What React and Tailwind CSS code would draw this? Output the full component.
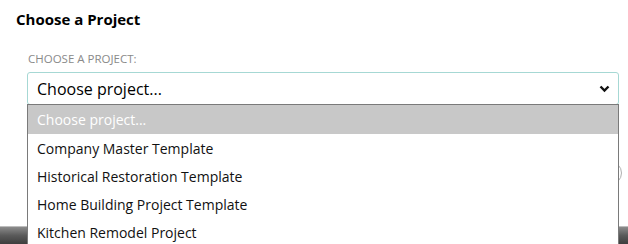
import React from "react";

const options = [
  "Company Master Template",
  "Historical Restoration Template",
  "Home Building Project Template",
  "Kitchen Remodel Project",
];

export default function App() {
  return (
    <div
      className="relative w-[628px] h-[244px] overflow-hidden bg-white flex flex-col"
      style={{ fontFamily: '"Open Sans", "Noto Sans", sans-serif' }}
    >
      <h1 className="pl-4 pt-[9px] text-[15px] font-bold text-black leading-[20px]">
        Choose a Project
      </h1>
      <div className="pl-[28px] pt-[23px] text-[11.5px] text-[#8a8a8a] leading-[14px]">
        CHOOSE A PROJECT:
      </div>
      <div className="ml-[27px] mt-[6px] w-[592px] h-[33px] border border-[#a6d8d4] rounded-[3px] flex items-center justify-between pl-[9px] pr-[8px]">
        <span className="text-[16px] text-black">Choose project...</span>
        <svg width="11" height="8" viewBox="0 0 11 8" className="mt-[1px]">
          <path d="M1.5 1.5 L5.5 5.5 L9.5 1.5" fill="none" stroke="#111" strokeWidth="2.4" />
        </svg>
      </div>
      <div className="flex-1 flex justify-end items-start pt-[56px]">
        <div className="w-[70px] h-[24px] rounded-full border border-[#b0b0b0] mr-[6px]" />
      </div>
      <div className="h-[18px] bg-gradient-to-b from-[#8c8c8c] via-[#5a5a5a] to-[#3e3e3e] border-t border-[#bdbdbd]" />

      <div className="absolute left-[27px] top-[104px] w-[592px] bg-white border-l border-r border-t border-[#7a7a7a]">
        <div className="h-[29px] bg-[#c8c8c8] text-white text-[14px] leading-[29px] pl-[9px]">
          Choose project...
        </div>
        {options.map((o) => (
          <div key={o} className="h-[28px] text-[14px] leading-[29px] pl-[9px] text-[#111]">
            {o}
          </div>
        ))}
      </div>
    </div>
  );
}
